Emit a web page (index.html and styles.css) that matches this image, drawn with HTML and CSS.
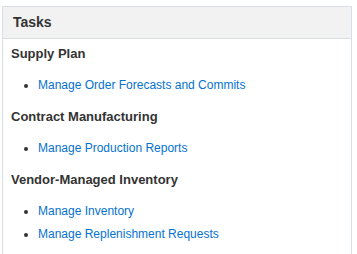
FILE: index.html
```html
<!DOCTYPE html>
<html lang="en">
<head>
    <meta charset="UTF-8">
    <title>Tasks</title>
    <link rel="stylesheet" href="styles.css">
</head>
<body>
    <div class="panel">
        <div class="panel-header">Tasks</div>
        <div class="panel-body">
            <h3 class="group-title">Supply Plan</h3>
            <ul class="task-list">
                <li><a href="#">Manage Order Forecasts and Commits</a></li>
            </ul>
            <h3 class="group-title">Contract Manufacturing</h3>
            <ul class="task-list">
                <li><a href="#">Manage Production Reports</a></li>
            </ul>
            <h3 class="group-title">Vendor-Managed Inventory</h3>
            <ul class="task-list">
                <li><a href="#">Manage Inventory</a></li>
                <li><a href="#">Manage Replenishment Requests</a></li>
            </ul>
        </div>
    </div>
</body>
</html>
```

FILE: styles.css
```css
* {
    box-sizing: border-box;
}

body {
    margin: 6px 0 0 2px;
    background: #fff;
    font-family: "Liberation Sans", Arial, sans-serif;
    color: #333;
}

.panel {
    width: 350px;
    height: 300px;
    border: 1px solid #d6dfe6;
}

.panel-header {
    height: 32px;
    padding: 0 10px;
    background: #f2f2f2;
    border-bottom: 1px solid #d6dfe6;
    font-size: 14px;
    font-weight: bold;
    line-height: 31px;
    color: #333;
}

.panel-body {
    padding: 7px 8px;
}

.group-title {
    margin: 0;
    font-size: 13px;
    line-height: 16px;
    font-weight: bold;
    color: #333;
}

.task-list {
    margin: 12px 0;
    padding-left: 27px;
    font-size: 12px;
    line-height: 23px;
}

.task-list a {
    color: #0572ce;
    text-decoration: none;
}
```
